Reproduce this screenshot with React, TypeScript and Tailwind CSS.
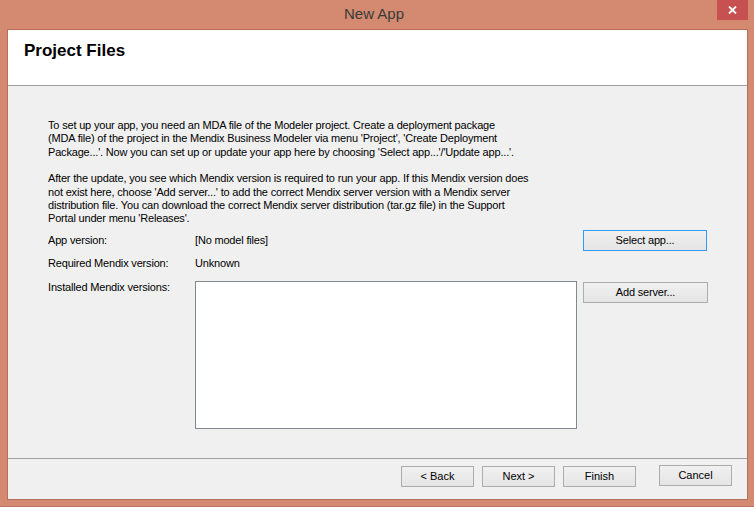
const font = { fontFamily: '"Liberation Sans", Arial, sans-serif' };

function WinButton({
  label,
  width,
  height = 'h-[21px]',
  focused = false,
  className = '',
}: {
  label: string;
  width: string;
  height?: string;
  focused?: boolean;
  className?: string;
}) {
  return (
    <button
      className={`${width} ${height} ${className} flex items-center justify-center border text-[11px] text-black bg-gradient-to-b from-[#f0f0f0] to-[#e5e5e5] ${
        focused ? 'border-[#3399ff]' : 'border-[#acacac]'
      }`}
    >
      {label}
    </button>
  );
}

export default function App() {
  return (
    <div className="w-[754px] h-[507px] flex flex-col bg-[#d38a70] border-b border-[#b87460]" style={font}>
      {/* Title bar */}
      <div className="h-[29px] shrink-0 grid grid-cols-[1fr_auto_1fr] pr-[6px]">
        <div />
        <div className="flex items-center text-[15px] text-[#3a3a3a]">New App</div>
        <div className="flex justify-end items-start">
          <div className="w-[31px] h-[20px] bg-[#c75050] flex items-center justify-center">
            <svg width="9" height="8" viewBox="0 0 9 8">
              <path d="M1 0.5 L8 7.5 M8 0.5 L1 7.5" stroke="#fff" strokeWidth="1.8" />
            </svg>
          </div>
        </div>
      </div>

      {/* Client area */}
      <div className="flex-1 flex pl-[7px] pr-[6px] pb-[6px]">
        <div className="flex-1 flex flex-col border border-[#b4705b] bg-[#f0f0f0] text-black">
          {/* Header */}
          <div className="h-[56px] shrink-0 bg-white border-b border-[#a0a0a0] pl-[16px] pt-[9px]">
            <span className="text-[17px] font-bold leading-[20px] text-black">Project Files</span>
          </div>

          {/* Body */}
          <div className="flex-1 flex flex-col pl-[40px] pt-[33px] text-[11px] tracking-[-0.18px]">
            <div className="leading-[13.33px]">
              <p>
                To set up your app, you need an MDA file of the Modeler project. Create a deployment package
                <br />
                (MDA file) of the project in the Mendix Business Modeler via menu 'Project', 'Create Deployment
                <br />
                Package...'. Now you can set up or update your app here by choosing 'Select app...'/'Update app...'.
              </p>
              <p className="mt-[13.33px]">
                After the update, you see which Mendix version is required to run your app. If this Mendix version does
                <br />
                not exist here, choose 'Add server...' to add the correct Mendix server version with a Mendix server
                <br />
                distribution file. You can download the correct Mendix server distribution (tar.gz file) in the Support
                <br />
                Portal under menu 'Releases'.
              </p>
            </div>

            <div className="mt-[4px] flex items-center h-[21px]">
              <div className="w-[147px]">App version:</div>
              <div className="w-[388px]">[No model files]</div>
              <WinButton label="Select app..." width="w-[124px]" focused />
            </div>

            <div className="mt-[6px] flex items-center h-[13px] leading-[13px]">
              <div className="w-[147px]">Required Mendix version:</div>
              <div>Unknown</div>
            </div>

            <div className="mt-[11px] flex items-start">
              <div className="w-[147px] leading-[13px]">Installed Mendix versions:</div>
              <div className="w-[382px] h-[148px] bg-white border border-[#828790]" />
              <WinButton label="Add server..." width="w-[125px]" height="h-[21px]" className="ml-[6px] mt-[1px]" />
            </div>
          </div>

          {/* Footer */}
          <div className="h-[41px] shrink-0 border-t border-[#a0a0a0] flex justify-end items-start pr-[15px] pt-[6px] text-[11px]">
            <WinButton label="< Back" width="w-[73px]" className="mt-[1px]" />
            <WinButton label="Next >" width="w-[73px]" className="ml-[8px] mt-[1px]" />
            <WinButton label="Finish" width="w-[73px]" className="ml-[8px] mt-[1px]" />
            <WinButton label="Cancel" width="w-[73px]" className="ml-[23px]" />
          </div>
        </div>
      </div>
    </div>
  );
}
